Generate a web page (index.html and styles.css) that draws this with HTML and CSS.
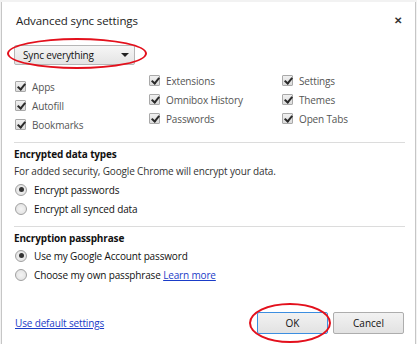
FILE: index.html
```html
<!DOCTYPE html>
<html lang="en">
<head>
  <meta charset="UTF-8">
  <title>Advanced sync settings</title>
  <link rel="stylesheet" href="styles.css">
</head>
<body>
  <div class="dialog">
    <!-- Header -->
    <div class="header">
      <h1 class="title">Advanced sync settings</h1>
      <span class="close">&#x2715;</span>
    </div>

    <!-- Sync mode dropdown -->
    <div class="select-row">
      <div class="select">
        <span>Sync everything</span>
        <span class="arrow"></span>
      </div>
      <span class="ring ring-select"></span>
    </div>

    <!-- Data types -->
    <div class="types">
      <div class="col col-first">
        <label class="check"><span class="box"></span>Apps</label>
        <label class="check"><span class="box"></span>Autofill</label>
        <label class="check"><span class="box"></span>Bookmarks</label>
      </div>
      <div class="col">
        <label class="check"><span class="box"></span>Extensions</label>
        <label class="check"><span class="box"></span>Omnibox History</label>
        <label class="check"><span class="box"></span>Passwords</label>
      </div>
      <div class="col">
        <label class="check"><span class="box"></span>Settings</label>
        <label class="check"><span class="box"></span>Themes</label>
        <label class="check"><span class="box"></span>Open Tabs</label>
      </div>
    </div>

    <div class="sep"></div>

    <!-- Encrypted data types -->
    <div class="section">
      <h2 class="section-title">Encrypted data types</h2>
      <p class="note">For added security, Google Chrome will encrypt your data.</p>
      <label class="radio"><span class="dot checked"></span>Encrypt passwords</label>
      <label class="radio"><span class="dot"></span>Encrypt all synced data</label>
    </div>

    <div class="sep"></div>

    <!-- Encryption passphrase -->
    <div class="section">
      <h2 class="section-title">Encryption passphrase</h2>
      <label class="radio"><span class="dot checked"></span>Use my Google Account password</label>
      <label class="radio"><span class="dot"></span>Choose my own passphrase&nbsp;<a href="#" class="link">Learn more</a></label>
    </div>

    <!-- Footer -->
    <div class="footer">
      <a href="#" class="link">Use default settings</a>
      <div class="buttons">
        <div class="ok-wrap">
          <button class="btn btn-focus">OK</button>
          <span class="ring ring-ok"></span>
        </div>
        <button class="btn">Cancel</button>
      </div>
    </div>
  </div>
</body>
</html>
```

FILE: styles.css
```css
* {
  box-sizing: border-box;
  margin: 0;
  padding: 0;
}

body {
  font-family: 'Open Sans', 'Noto Sans', sans-serif;
  font-size: 10px;
  letter-spacing: -0.15px;
  color: #111;
  background-color: #f2f2f2;
  width: 417px;
  height: 344px;
  overflow: hidden;
}

.dialog {
  margin: 2px 1px 0 1px;
  height: 342px;
  background-color: #fff;
  border-left: 1px solid #c6c6c6;
  border-right: 1px solid #c6c6c6;
  padding: 0 10px 0 12px;
}

.header {
  display: flex;
  justify-content: space-between;
  align-items: center;
  height: 36px;
  padding: 0 0 0 2px;
}

.title {
  font-size: 11.5px;
  font-weight: normal;
  letter-spacing: -0.1px;
  color: #222;
}

.close {
  font-size: 10px;
  font-weight: bold;
  color: #333;
  margin-right: 3px;
}

/* Dropdown */
.select-row {
  position: relative;
  height: 31px;
  padding-top: 7px;
}

.select {
  width: 121px;
  height: 20px;
  display: flex;
  align-items: center;
  justify-content: space-between;
  padding: 0 5px 0 8px;
  border: 1px solid #b6b6b6;
  border-radius: 2px;
  background: linear-gradient(#f6f6f6, #e4e4e4);
  color: #111;
}

.arrow {
  width: 0;
  height: 0;
  border-left: 4px solid transparent;
  border-right: 4px solid transparent;
  border-top: 4px solid #222;
}

/* Red annotation rings */
.ring {
  position: absolute;
  border: 2.5px solid #e3101c;
  border-radius: 50%;
  pointer-events: none;
}

.ring-select {
  left: -7px;
  top: 0;
  width: 140px;
  height: 31px;
}

/* Checkbox grid */
.types {
  display: grid;
  grid-template-columns: 134px 133px 1fr;
  padding: 2px 0 0 1px;
  height: 73px;
}

.col {
  display: flex;
  flex-direction: column;
}

.col-first {
  padding-top: 6px;
}

.check {
  display: flex;
  align-items: center;
  height: 19px;
  color: #555;
}

.box {
  width: 11px;
  height: 11px;
  margin-right: 6px;
  border: 1px solid #a9a9a9;
  border-radius: 1px;
  background: linear-gradient(#f0f0f0, #dcdcdc);
  position: relative;
}

.box::after {
  content: '';
  position: absolute;
  left: 3px;
  top: 0px;
  width: 3px;
  height: 6px;
  border-right: 2px solid #2a2a2a;
  border-bottom: 2px solid #2a2a2a;
  transform: rotate(40deg);
}

.sep {
  height: 1px;
  background-color: #dcdcdc;
}

/* Sections */
.section {
  padding: 3px 0 8px 1px;
}

.section-title {
  font-size: 10px;
  font-weight: bold;
  line-height: 16px;
  color: #111;
  margin-left: -1px;
}

.note {
  line-height: 18px;
  color: #333;
  margin-left: -1px;
}

.radio {
  display: flex;
  align-items: center;
  height: 19px;
  color: #111;
}

.dot {
  width: 12px;
  height: 12px;
  margin-right: 7px;
  border: 1px solid #a0a0a0;
  border-radius: 50%;
  background: radial-gradient(#f4f4f4, #dedede);
  position: relative;
}

.dot.checked::after {
  content: '';
  position: absolute;
  left: 2.5px;
  top: 2.5px;
  width: 5px;
  height: 5px;
  border-radius: 50%;
  background-color: #333;
}

.link {
  color: #1a3cc8;
  text-decoration: underline;
}

/* Footer */
.footer {
  display: flex;
  justify-content: space-between;
  align-items: center;
  margin-top: 20px;
  padding-left: 1px;
}

.buttons {
  display: flex;
  gap: 5px;
  margin-right: 1px;
}

.ok-wrap {
  position: relative;
}

.btn {
  font-family: inherit;
  font-size: 10px;
  width: 71px;
  height: 22px;
  color: #111;
  border: 1px solid #adadad;
  border-radius: 2px;
  background: linear-gradient(#f2f2f2, #e2e2e2);
}

.btn-focus {
  border-color: #3c8ee0;
}

.ring-ok {
  left: -8px;
  top: -9px;
  width: 82px;
  height: 40px;
}
```
